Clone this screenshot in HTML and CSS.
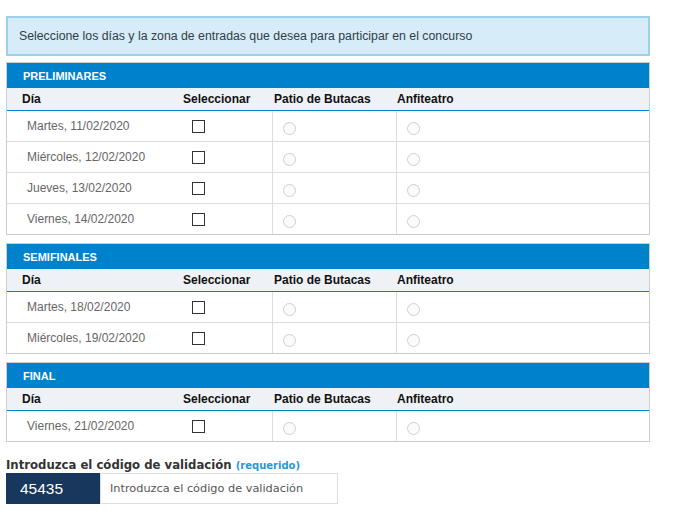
FILE: index.html
```html
<!DOCTYPE html>
<html lang="es">
<head>
    <meta charset="UTF-8">
    <meta name="viewport" content="width=device-width, initial-scale=1.0">
    <title>Concurso</title>
    <link rel="stylesheet" href="styles.css">
</head>
<body>
    <div class="page">
        <div class="notice">Seleccione los días y la zona de entradas que desea para participar en el concurso</div>

        <!-- preliminares -->
        <section class="round">
            <div class="round-title">PRELIMINARES</div>
            <div class="round-row round-head">
                <span class="col-day">Día</span>
                <span class="col-sel">Seleccionar</span>
                <span class="col-patio">Patio de Butacas</span>
                <span class="col-anfi">Anfiteatro</span>
            </div>
            <div class="round-row">
                <span class="day">Martes, 11/02/2020</span>
                <span class="pick"><input type="checkbox"></span>
                <span class="zone"><input type="radio" name="z1" disabled></span>
                <span class="zone"><input type="radio" name="z1" disabled></span>
            </div>
            <div class="round-row">
                <span class="day">Miércoles, 12/02/2020</span>
                <span class="pick"><input type="checkbox"></span>
                <span class="zone"><input type="radio" name="z2" disabled></span>
                <span class="zone"><input type="radio" name="z2" disabled></span>
            </div>
            <div class="round-row">
                <span class="day">Jueves, 13/02/2020</span>
                <span class="pick"><input type="checkbox"></span>
                <span class="zone"><input type="radio" name="z3" disabled></span>
                <span class="zone"><input type="radio" name="z3" disabled></span>
            </div>
            <div class="round-row">
                <span class="day">Viernes, 14/02/2020</span>
                <span class="pick"><input type="checkbox"></span>
                <span class="zone"><input type="radio" name="z4" disabled></span>
                <span class="zone"><input type="radio" name="z4" disabled></span>
            </div>
        </section>

        <!-- semifinales -->
        <section class="round">
            <div class="round-title">SEMIFINALES</div>
            <div class="round-row round-head">
                <span class="col-day">Día</span>
                <span class="col-sel">Seleccionar</span>
                <span class="col-patio">Patio de Butacas</span>
                <span class="col-anfi">Anfiteatro</span>
            </div>
            <div class="round-row">
                <span class="day">Martes, 18/02/2020</span>
                <span class="pick"><input type="checkbox"></span>
                <span class="zone"><input type="radio" name="z5" disabled></span>
                <span class="zone"><input type="radio" name="z5" disabled></span>
            </div>
            <div class="round-row">
                <span class="day">Miércoles, 19/02/2020</span>
                <span class="pick"><input type="checkbox"></span>
                <span class="zone"><input type="radio" name="z6" disabled></span>
                <span class="zone"><input type="radio" name="z6" disabled></span>
            </div>
        </section>

        <!-- final -->
        <section class="round">
            <div class="round-title">FINAL</div>
            <div class="round-row round-head">
                <span class="col-day">Día</span>
                <span class="col-sel">Seleccionar</span>
                <span class="col-patio">Patio de Butacas</span>
                <span class="col-anfi">Anfiteatro</span>
            </div>
            <div class="round-row">
                <span class="day">Viernes, 21/02/2020</span>
                <span class="pick"><input type="checkbox"></span>
                <span class="zone"><input type="radio" name="z7" disabled></span>
                <span class="zone"><input type="radio" name="z7" disabled></span>
            </div>
        </section>

        <label class="code-label" for="codeInput">Introduzca el código de validación <span class="required">(requerido)</span></label>
        <div class="code-group">
            <div class="code-value">45435</div>
            <input type="text" id="codeInput" class="code-input" placeholder="Introduzca el código de validación">
        </div>
    </div>
</body>
</html>
```

FILE: styles.css
```css
body {
    margin: 0;
    background: #fff;
    font-family: "Liberation Sans", Arial, sans-serif;
    font-size: 12px;
    color: #333;
}
.page {
    width: 644px;
    padding: 16px 0 0 6px;
}
.notice {
    height: 36px;
    display: flex;
    align-items: center;
    padding-left: 11px;
    background: #d6ecf8;
    border: 2px solid #9dd0ea;
    color: #333d47;
    font-size: 12.3px;
}
.round {
    border: 1px solid #cccccc;
    margin-top: 8px;
}
.notice + .round {
    margin-top: 6px;
}
.round-title {
    height: 25px;
    display: flex;
    align-items: center;
    padding-left: 16px;
    background: #0081cc;
    color: #fff;
    font-weight: bold;
    font-size: 11px;
}
.round-row {
    display: grid;
    grid-template-columns: 170px 95px 124px 253px;
    height: 30px;
    border-top: 1px solid #dddddd;
}
.round-row > span {
    display: flex;
    align-items: center;
}
.round-head {
    height: 22px;
    border-top: none;
    border-bottom: 1px solid #0081cc;
    background: #eef1f5;
    color: #111;
    font-weight: bold;
}
.round-head + .round-row {
    border-top: none;
}
.col-day { padding-left: 15px; }
.col-sel { padding-left: 6px; }
.col-patio { padding-left: 2px; }
.col-anfi { padding-left: 1px; }

.day {
    padding-left: 20px;
    color: #666;
}
.pick {
    padding-left: 15px;
}
.zone {
    padding-left: 10px;
    border-left: 1px solid #dddddd;
}
input[type=checkbox] {
    appearance: none;
    width: 13px;
    height: 13px;
    margin: 0;
    border: 1px solid #333;
    background: #fff;
}
input[type=radio] {
    appearance: none;
    width: 13px;
    height: 13px;
    margin: 5px 0 0 0;
    border: 1px solid #cfcfcf;
    border-radius: 50%;
    background: #fbfbfb;
}
.code-label {
    display: block;
    margin-top: 16px;
    line-height: 15px;
    font-family: "DejaVu Sans", Verdana, sans-serif;
    font-size: 11.7px;
    font-weight: bold;
    color: #333;
}
.required {
    font-size: 10px;
    color: #1e9ad6;
}
.code-group {
    display: flex;
    height: 31px;
    width: 332px;
}
.code-value {
    width: 80px;
    padding-left: 14px;
    display: flex;
    align-items: center;
    background: #17385c;
    color: #fff;
    font-size: 15.5px;
}
.code-input {
    flex: 1;
    margin: 0;
    padding: 0 0 0 9px;
    border: 1px solid #dddddd;
    font-family: "DejaVu Sans", Verdana, sans-serif;
    font-size: 11.3px;
    outline: none;
}
.code-input::placeholder {
    color: #555;
}
```
